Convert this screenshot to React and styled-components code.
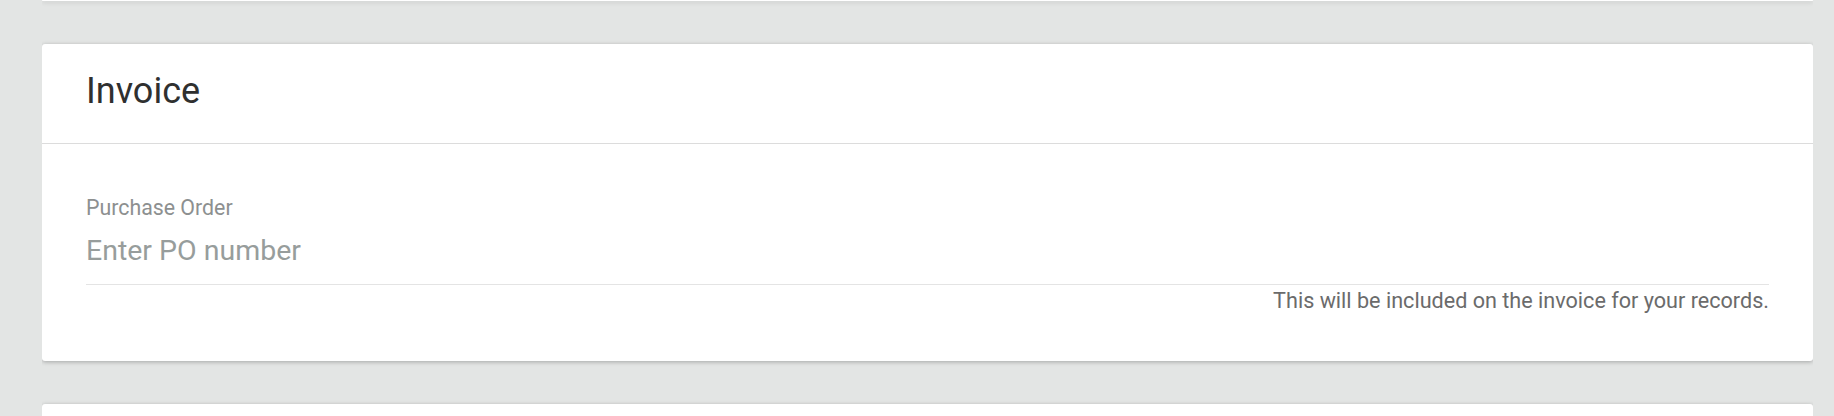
import React from "react";
import styled, { createGlobalStyle } from "styled-components";

const Global = createGlobalStyle`
  html, body { margin: 0; padding: 0; background: #e3e5e4; }
  body { font-family: Roboto, "Liberation Sans", Arial, sans-serif; }
  * { box-sizing: border-box; }
`;

const Page = styled.div`
  display: flex;
  flex-direction: column;
  gap: 43px;
  margin: 0 21px 0 42px;
  height: 416px;
  overflow: hidden;
`;

const Card = styled.section`
  flex: 0 0 auto;
  background: #fff;
  border-radius: 3px;
  box-shadow: 0 1px 4px rgba(0, 0, 0, 0.28);
  height: ${(p) => (p.$height ? `${p.$height}px` : "auto")};
  overflow: hidden;
`;

const CardHeader = styled.header`
  padding: 26px 44px 31px;
  border-bottom: 1px solid #dcdcdc;
`;

const Title = styled.h2`
  margin: 0;
  font-size: 36px;
  line-height: 42px;
  font-weight: 400;
  color: #2f3030;
`;

const CardBody = styled.div`
  padding: 51px 44px 48px;
`;

const Field = styled.label`
  display: flex;
  flex-direction: column;
`;

const Label = styled.span`
  font-size: 21.33px;
  line-height: 25px;
  color: #8d9090;
`;

const Input = styled.input`
  margin-top: 14px;
  border: none;
  border-bottom: 1px solid #e4e4e4;
  outline: none;
  padding: 0 0 17px;
  font-family: inherit;
  font-size: 28.5px;
  line-height: 33px;
  height: 51px;
  color: #333;
  background: transparent;
  &::placeholder {
    color: #979d9c;
  }
`;

const Helper = styled.span`
  margin-top: 3px;
  align-self: flex-end;
  font-size: 21.6px;
  line-height: 25px;
  color: #6b6b6b;
`;

export default function App() {
  return (
    <>
      <Global />
      <Page>
        <Card $height={1} />
        <Card>
          <CardHeader>
            <Title>Invoice</Title>
          </CardHeader>
          <CardBody>
            <Field>
              <Label>Purchase Order</Label>
              <Input type="text" placeholder="Enter PO number" />
              <Helper>This will be included on the invoice for your records.</Helper>
            </Field>
          </CardBody>
        </Card>
        <Card $height={120} />
      </Page>
    </>
  );
}
